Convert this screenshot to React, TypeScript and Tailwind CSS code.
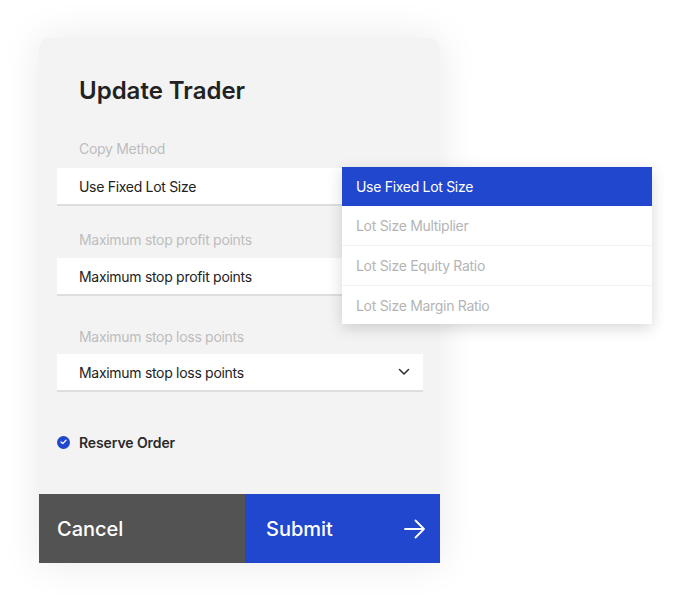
import React from "react";

function Chevron() {
  return (
    <svg width="12" height="8" viewBox="0 0 12 8" fill="none">
      <path d="M1.5 1.5L6 6L10.5 1.5" stroke="#333" strokeWidth="1.6" strokeLinecap="round" strokeLinejoin="round" />
    </svg>
  );
}

function Field({ label, value, labelMt, gap, chevron }: { label: string; value: string; labelMt: string; gap: string; chevron?: boolean }) {
  return (
    <div className={labelMt}>
      <div className={`px-[22px] text-[14px] leading-[20px] tracking-[-0.3px] text-[#bdbdbd] ${gap}`}>{label}</div>
      <div className="flex h-[38px] items-center justify-between border-b-2 border-[#dedede] bg-white pl-[22px] pr-[13px] text-[14px] tracking-[-0.3px] text-[#222]">
        <span>{value}</span>
        {chevron && <Chevron />}
      </div>
    </div>
  );
}

export default function App() {
  return (
    <div className="min-h-[601px] w-[697px] bg-white pt-[38px] pl-[39px]" style={{ fontFamily: "Inter, 'Noto Sans', sans-serif" }}>
      <div className="relative w-[401px] rounded-t-[10px] bg-[#f3f3f3] shadow-[0_0_40px_rgba(0,0,0,0.09)]">
        <div className="pl-[18px] pr-[17px] pt-[37px]">
          <h1 className="px-[22px] text-[24px] font-semibold leading-[32px] text-[#222]">Update Trader</h1>
          <Field label="Copy Method" value="Use Fixed Lot Size" labelMt="mt-[32px]" gap="mb-[9px]" />
          <Field label="Maximum stop profit points" value="Maximum stop profit points" labelMt="mt-[24px]" gap="mb-[8px]" />
          <Field label="Maximum stop loss points" value="Maximum stop loss points" labelMt="mt-[31px]" gap="mb-[7px]" chevron />
          <div className="mt-[40px] flex h-[20px] items-center gap-[9px]">
            <span className="flex h-[13px] w-[13px] items-center justify-center rounded-full bg-[#2047ce]">
              <svg width="7" height="6" viewBox="0 0 7 6" fill="none">
                <path d="M1 3L2.8 4.6L6 1.2" stroke="white" strokeWidth="1.3" strokeLinecap="round" strokeLinejoin="round" />
              </svg>
            </span>
            <span className="text-[14px] font-semibold tracking-[-0.1px] text-[#2a2a2a]">Reserve Order</span>
          </div>
        </div>
        <div className="mt-[42px] flex h-[69px]">
          <div className="flex w-[206px] items-center bg-[#535353] pl-[18px] text-[20px] font-medium text-white">Cancel</div>
          <div className="flex flex-1 items-center justify-between bg-[#2047ce] pl-[21px] pr-[13px] text-[20px] font-medium text-white">
            <span>Submit</span>
            <svg width="24" height="22" viewBox="0 0 24 22" fill="none">
              <path d="M2 11H21M12.5 2.5L21 11L12.5 19.5" stroke="white" strokeWidth="1.8" strokeLinecap="round" strokeLinejoin="round" />
            </svg>
          </div>
        </div>
        <div className="absolute left-[303px] top-[129px] w-[310px] bg-white text-[14px] tracking-[-0.3px] shadow-[0_4px_14px_rgba(0,0,0,0.16)]">
          <div className="flex h-[39px] items-center bg-[#2047ce] px-[14px] text-white">Use Fixed Lot Size</div>
          <div className="flex h-[40px] items-center border-b border-[#f2f2f2] px-[14px] text-[#b4b4b4]">Lot Size Multiplier</div>
          <div className="flex h-[40px] items-center border-b border-[#f2f2f2] px-[14px] text-[#b4b4b4]">Lot Size Equity Ratio</div>
          <div className="flex h-[38px] items-center px-[14px] text-[#b4b4b4]">Lot Size Margin Ratio</div>
        </div>
      </div>
    </div>
  );
}
